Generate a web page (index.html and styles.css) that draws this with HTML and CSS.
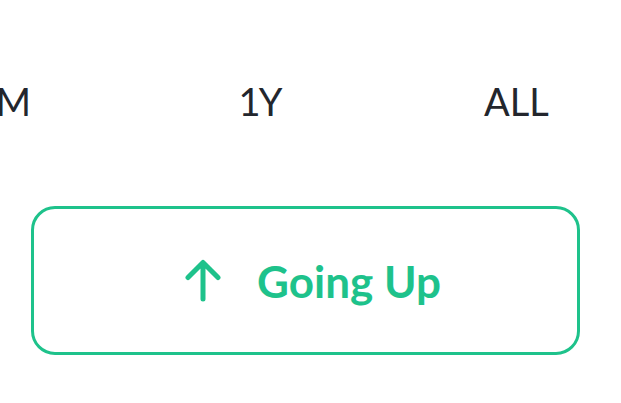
FILE: index.html
```html
<!DOCTYPE html>
<html>
<head>
    <title>Trend</title>
    <link rel="stylesheet" href="styles.css">
</head>
<body>
    <div class="range-tabs">
        <div class="tab">1M</div>
        <div class="tab">1Y</div>
        <div class="tab">ALL</div>
    </div>

    <button class="trend-button" type="button">
        <svg class="trend-icon" width="38" height="43" viewBox="0 0 38 43">
            <path d="M19 4 V40 M4 18.5 L19 3.5 L34 18.5" fill="none" stroke="#1ec28b" stroke-width="5" stroke-linecap="round" stroke-linejoin="round"/>
        </svg>
        <span class="trend-label">Going Up</span>
    </button>
</body>
</html>
```

FILE: styles.css
```css
body {
    margin: 0;
    padding: 0;
    width: 621px;
    height: 403px;
    overflow: hidden;
    background: #ffffff;
    font-family: Lato, "Noto Sans", sans-serif;
}

.range-tabs {
    display: grid;
    grid-template-columns: repeat(3, 257px);
    margin-left: -126px;
    padding-top: 78px;
}

.tab {
    text-align: center;
    font-size: 38px;
    line-height: 46px;
    color: #23262d;
}

.tab:nth-child(2) {
    letter-spacing: -2px;
}

.trend-button {
    display: flex;
    align-items: center;
    justify-content: center;
    gap: 35px;
    margin: 82px 0 0 31px;
    width: 549px;
    height: 149px;
    padding: 0;
    background: white;
    border: 3px solid #1ec28b;
    border-radius: 24px;
    cursor: pointer;
}

.trend-icon {
    display: block;
    margin-left: 14px;
}

.trend-label {
    font-family: Lato, "Noto Sans", sans-serif;
    font-weight: 700;
    font-size: 44px;
    color: #1ec28b;
}
```
